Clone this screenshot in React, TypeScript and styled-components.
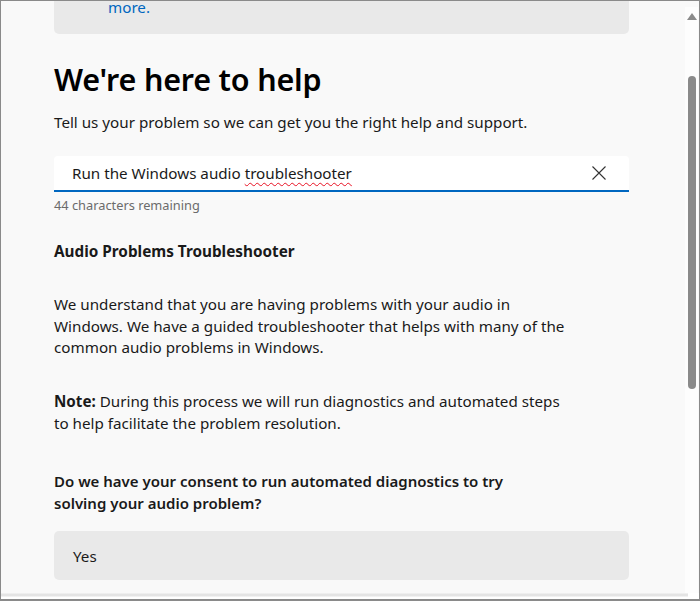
import React from 'react';
import styled, { createGlobalStyle } from 'styled-components';

const GlobalStyle = createGlobalStyle`
  html, body {
    margin: 0;
    padding: 0;
    background: #ffffff;
  }
  * { box-sizing: border-box; }
`;

const Frame = styled.div`
  width: 700px;
  height: 601px;
  border: 1px solid #8a8a8a;
  border-bottom-width: 2px;
  background: #ffffff;
  display: flex;
  flex-direction: column;
  overflow: hidden;
  font-family: 'Noto Sans', 'Liberation Sans', sans-serif;
  color: #1a1a1a;
`;

const Viewport = styled.div`
  flex: 1;
  display: flex;
  min-height: 0;
  background: #f9f9f9;
`;

const Content = styled.div`
  flex: 1;
  padding: 0 56px 0 53px;
  overflow: hidden;
`;

const Scrollbar = styled.div`
  width: 13px;
  margin: 6px 1px 0 0;
  background: #fdfdfd;
  display: flex;
  flex-direction: column;
  align-items: center;
  padding-top: 6px;
`;

const Arrow = styled.div`
  width: 0;
  height: 0;
  border-left: 5px solid transparent;
  border-right: 5px solid transparent;
  border-bottom: 7px solid #8a8a8a;
`;

const Thumb = styled.div<{ $offset: number; $length: number }>`
  width: 8px;
  margin-top: ${p => p.$offset}px;
  height: ${p => p.$length}px;
  background: #8a8a8a;
  border-radius: 4px;
`;

const BottomBar = styled.div`
  height: 6px;
  background: linear-gradient(#f9f9f9 0, #e4e4e4 1px, #e4e4e4 3px, #ffffff 4px);
  margin-right: 11px;
`;

const InfoCard = styled.div`
  margin-top: -20px;
  height: 53px;
  background: #e9e9e9;
  border-radius: 0 0 5px 5px;
  padding: 15px 0 0 54px;
`;

const Link = styled.a`
  color: #0067c0;
  font-size: 15.2px;
  line-height: 20px;
  text-decoration: none;
`;

const Title = styled.h1`
  margin: 25px 0 0;
  font-size: 30.5px;
  font-weight: 600;
  line-height: 40px;
  color: #000000;
  letter-spacing: -0.2px;
`;

const Text = styled.p<{ $gap?: number; $weight?: number; $size?: number }>`
  margin: ${p => p.$gap ?? 0}px 0 0;
  font-size: ${p => p.$size ?? 15.2}px;
  line-height: 21.6px;
  font-weight: ${p => p.$weight ?? 400};
  color: #1a1a1a;
`;

const SearchBox = styled.div`
  margin-top: 22px;
  height: 36px;
  background: #ffffff;
  border-radius: 4px 4px 0 0;
  border-bottom: 2px solid #0067c0;
  display: flex;
  align-items: center;
  padding: 0 22px 0 18px;
`;

const SearchValue = styled.span`
  flex: 1;
  font-size: 15.2px;
  color: #1a1a1a;
`;

const Misspelt = styled.span`
  text-decoration: underline wavy #e81123;
  text-decoration-thickness: 1px;
  text-underline-offset: 3px;
`;

const ClearButton = styled.button`
  border: none;
  background: none;
  padding: 0;
  width: 16px;
  height: 16px;
  display: flex;
  cursor: pointer;
`;

const Counter = styled.div`
  margin-top: 4px;
  font-size: 12.8px;
  line-height: 18px;
  color: #6b6b6b;
`;

const Answer = styled.button`
  display: block;
  width: 100%;
  margin-top: 17px;
  height: 49px;
  border: none;
  border-radius: 5px;
  background: #e9e9e9;
  text-align: left;
  padding: 0 0 0 19px;
  font-family: inherit;
  font-size: 15.2px;
  color: #1a1a1a;
`;

export default function App() {
  return (
    <>
      <GlobalStyle />
      <Frame>
        <Viewport>
          <Content>
            <InfoCard>
              <Link href="#">more.</Link>
            </InfoCard>
            <Title>We're here to help</Title>
            <Text $gap={13}>Tell us your problem so we can get you the right help and support.</Text>
            <SearchBox>
              <SearchValue>
                Run the Windows audio <Misspelt>troubleshooter</Misspelt>
              </SearchValue>
              <ClearButton aria-label="Clear">
                <svg width="16" height="16" viewBox="0 0 16 16">
                  <path d="M1.5 1.5 L14.5 14.5 M14.5 1.5 L1.5 14.5" stroke="#333" strokeWidth="1.1" fill="none" />
                </svg>
              </ClearButton>
            </SearchBox>
            <Counter>44 characters remaining</Counter>
            <Text $gap={27} $weight={700} $size={15.3}>Audio Problems Troubleshooter</Text>
            <Text $gap={32}>
              We understand that you are having problems with your audio in<br />
              Windows. We have a guided troubleshooter that helps with many of the<br />
              common audio problems in Windows.
            </Text>
            <Text $gap={32}>
              <b>Note:</b> During this process we will run diagnostics and automated steps<br />
              to help facilitate the problem resolution.
            </Text>
            <Text $gap={37} $weight={600} $size={15}>
              Do we have your consent to run automated diagnostics to try<br />
              solving your audio problem?
            </Text>
            <Answer>Yes</Answer>
          </Content>
          <Scrollbar>
            <Arrow />
            <Thumb $offset={56} $length={313} />
          </Scrollbar>
        </Viewport>
        <BottomBar />
      </Frame>
    </>
  );
}
